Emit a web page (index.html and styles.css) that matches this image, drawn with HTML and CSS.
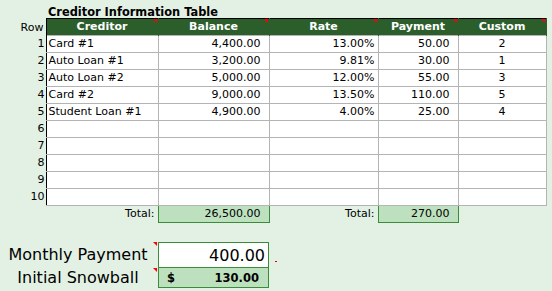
FILE: index.html
```html
<!DOCTYPE html>
<html>
<head>
<meta charset="utf-8">
<link rel="stylesheet" href="styles.css">
</head>
<body>
<div class="sheet">
  <div class="title">Creditor Information Table</div>
  <table class="grid">
    <colgroup>
      <col class="c-row"><col class="c-cred"><col class="c-bal"><col class="c-rate"><col class="c-pay"><col class="c-cust">
    </colgroup>
    <thead>
      <tr>
        <th class="rowhead">Row</th>
        <th class="hd first"><span class="mark"></span>Creditor</th>
        <th class="hd"><span class="mark"></span>Balance</th>
        <th class="hd"><span class="mark"></span>Rate</th>
        <th class="hd"><span class="mark"></span>Payment</th>
        <th class="hd"><span class="mark"></span>Custom</th>
      </tr>
    </thead>
    <tbody>
      <tr><td class="rn">1</td><td class="cell first txt">Card #1</td><td class="cell num">4,400.00</td><td class="cell pct">13.00%</td><td class="cell num">50.00</td><td class="cell ctr">2</td></tr>
      <tr><td class="rn">2</td><td class="cell first txt">Auto Loan #1</td><td class="cell num">3,200.00</td><td class="cell pct">9.81%</td><td class="cell num">30.00</td><td class="cell ctr">1</td></tr>
      <tr><td class="rn">3</td><td class="cell first txt">Auto Loan #2</td><td class="cell num">5,000.00</td><td class="cell pct">12.00%</td><td class="cell num">55.00</td><td class="cell ctr">3</td></tr>
      <tr><td class="rn">4</td><td class="cell first txt">Card #2</td><td class="cell num">9,000.00</td><td class="cell pct">13.50%</td><td class="cell num">110.00</td><td class="cell ctr">5</td></tr>
      <tr><td class="rn">5</td><td class="cell first txt">Student Loan #1</td><td class="cell num">4,900.00</td><td class="cell pct">4.00%</td><td class="cell num">25.00</td><td class="cell ctr">4</td></tr>
      <tr><td class="rn">6</td><td class="cell first txt"></td><td class="cell num"></td><td class="cell pct"></td><td class="cell num"></td><td class="cell ctr"></td></tr>
      <tr><td class="rn">7</td><td class="cell first txt"></td><td class="cell num"></td><td class="cell pct"></td><td class="cell num"></td><td class="cell ctr"></td></tr>
      <tr><td class="rn">8</td><td class="cell first txt"></td><td class="cell num"></td><td class="cell pct"></td><td class="cell num"></td><td class="cell ctr"></td></tr>
      <tr><td class="rn">9</td><td class="cell first txt"></td><td class="cell num"></td><td class="cell pct"></td><td class="cell num"></td><td class="cell ctr"></td></tr>
      <tr><td class="rn">10</td><td class="cell first txt"></td><td class="cell num"></td><td class="cell pct"></td><td class="cell num"></td><td class="cell ctr"></td></tr>
      <tr class="totals">
        <td></td>
        <td class="tlabel">Total:</td>
        <td class="tbox num">26,500.00</td>
        <td class="tlabel">Total:</td>
        <td class="tbox num">270.00</td>
        <td></td>
      </tr>
    </tbody>
  </table>

  <div class="summary">
    <div class="srow srow-pay">
      <div class="slabel"><span class="mark"></span>Monthly Payment</div>
      <div class="sbox pay">400.00</div>
      <span class="dot"></span>
    </div>
    <div class="srow srow-snow">
      <div class="slabel"><span class="mark"></span>Initial Snowball</div>
      <div class="sbox snow"><span>$</span><span>130.00</span></div>
    </div>
  </div>
</div>
</body>
</html>
```
FILE: styles.css
```css
html, body {
  margin: 0;
  padding: 0;
}
body {
  background: #e3f1e4;
  font-family: "DejaVu Sans", Verdana, sans-serif;
  font-size: 11px;
  color: #000;
}
.sheet {
  width: 552px;
  height: 291px;
  overflow: hidden;
}
.title {
  height: 17px;
  padding-left: 48px;
  font-weight: bold;
  font-size: 11.4px;
  line-height: 24px;
  height: 18px;
  overflow: visible;
}
.grid {
  border-collapse: collapse;
  table-layout: fixed;
  width: 546px;
}
.c-row { width: 46px; }
.c-cred { width: 112px; }
.c-bal { width: 111px; }
.c-rate { width: 109px; }
.c-pay { width: 80px; }
.c-cust { width: 88px; }

.grid th, .grid td {
  padding: 0;
  height: 16px;
  line-height: 16px;
  white-space: nowrap;
  overflow: hidden;
}
.rowhead {
  font-weight: normal;
  text-align: right;
  padding-right: 2px !important;
  vertical-align: bottom;
}
.hd {
  position: relative;
  background: #2c5e2c;
  color: #fff;
  font-weight: bold;
  text-align: center;
  border-top: 1px solid #000;
  border-right: 1px solid #2c5e2c;
  line-height: 17px;
}
.hd.first { border-left: 1px solid #000; }
.mark {
  position: absolute;
  top: 0;
  right: 1px;
  width: 0;
  height: 0;
  border-top: 4px solid #ff0000;
  border-left: 4px solid transparent;
}
.rn {
  text-align: right;
  padding-right: 1px !important;
}
.cell {
  background: #fff;
  border: 1px solid #b4b4b4;
}
.cell.first { border-left: 1px solid #000; }
.txt { text-align: left; padding-left: 2px !important; }
.num { text-align: right; padding-right: 8px !important; }
.pct { text-align: right; padding-right: 3px !important; }
.ctr { text-align: center; }

.totals td { height: 16px; }
.tlabel {
  text-align: right;
  padding-right: 3px !important;
}
.tbox {
  background: #bde1bf;
  border: 1px solid #3b8b3b;
}

.summary {
  margin-top: 19px;
  display: flex;
  flex-direction: column;
}
.srow {
  display: flex;
  position: relative;
}
.slabel {
  position: relative;
  width: 158px;
  text-align: center;
  font-size: 16px;
  padding-right: 2px;
  box-sizing: border-box;
}
.slabel .mark { right: 1px; }
.srow-pay .slabel { line-height: 25px; }
.srow-snow .slabel { line-height: 20px; }
.sbox {
  width: 111px;
  box-sizing: border-box;
  border: 1px solid #3b8b3b;
}
.sbox.pay {
  height: 26px;
  background: #fff;
  font-size: 16px;
  text-align: right;
  padding-right: 3px;
  line-height: 25px;
}
.sbox.snow {
  height: 21px;
  margin-top: -1px;
  background: #bde1bf;
  font-weight: bold;
  font-size: 11.5px;
  display: flex;
  justify-content: space-between;
  align-items: center;
  padding: 0 9px 0 8px;
}
.dot {
  position: absolute;
  left: 275px;
  top: 19px;
  width: 2px;
  height: 1px;
  background: #e00000;
}
```
